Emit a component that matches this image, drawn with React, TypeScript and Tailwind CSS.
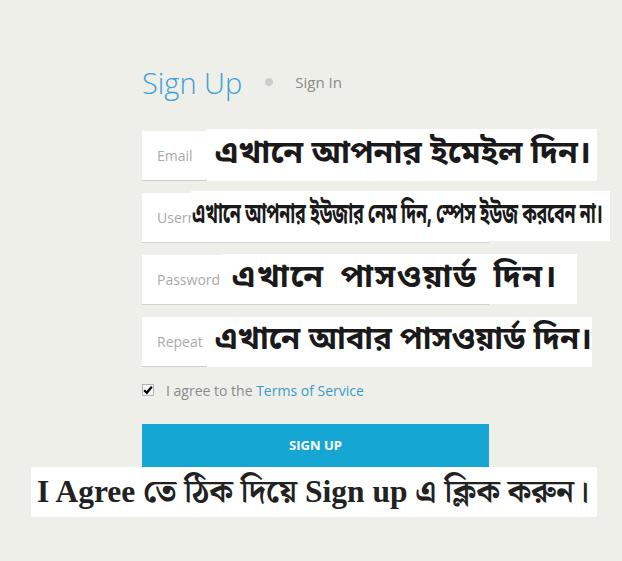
import React from "react";

const bn = { fontFamily: '"Noto Sans Bengali","Noto Serif Bengali","Lohit Bengali","FreeSans",sans-serif' };

function Field({ placeholder, overlay, ox, ow, oy, oh, textCls }: { placeholder: string; overlay: string; ox: number; ow: number; oy: number; oh: number; textCls: string }) {
  return (
    <div className="relative h-[50px] w-[347px] mb-[12px]">
      <div className="h-full w-full bg-white border-b border-[#d0cfca] flex items-center pl-[15px] text-[14px] text-[#aaaaaa]">
        {placeholder}
      </div>
      <div
        className="absolute bg-white flex items-center whitespace-nowrap overflow-hidden"
        style={{ left: ox, width: ow, top: oy, height: oh }}
      >
        <span className={textCls} style={bn}>{overlay}</span>
      </div>
    </div>
  );
}

export default function App() {
  return (
    <div className="min-h-[561px] w-full bg-[#efefea] relative" style={{ fontFamily: '"Open Sans", sans-serif' }}>
      <div className="pl-[142px] pt-[58px]">
        <div className="flex items-center h-[48px]">
          <span className="text-[29px] font-light text-[#3d9fd6] leading-none">Sign Up</span>
          <span className="ml-[23px] w-[8px] h-[8px] rounded-full bg-[#cccccc]" />
          <span className="ml-[22px] text-[15px] text-[#8b8b8b] leading-none">Sign In</span>
        </div>
        <div className="mt-[25px]">
          <Field placeholder="Email" overlay="এখানে আপনার ইমেইল দিন।" ox={65} ow={390} oy={-2} oh={52} textCls="text-[32px] font-bold text-[#1a1a1a] pl-[8px]" />
          <Field placeholder="Username" overlay="এখানে আপনার ইউজার নেম দিন, স্পেস ইউজ করবেন না।" ox={49} ow={419} oy={-2} oh={50} textCls="inline-block text-[28px] font-bold text-[#1a1a1a] pl-[2px] origin-left scale-x-[0.64] tracking-[-0.5px]" />
          <Field placeholder="Password" overlay="এখানে পাসওয়ার্ড দিন।" ox={80} ow={355} oy={-1} oh={50} textCls="text-[32px] font-bold text-[#1a1a1a] pl-[10px] tracking-[1.5px] [word-spacing:6px]" />
          <Field placeholder="Repeat Password" overlay="এখানে আবার পাসওয়ার্ড দিন।" ox={65} ow={385} oy={0} oh={50} textCls="text-[31px] font-bold text-[#1a1a1a] pl-[8px]" />
        </div>
        <div className="flex items-center mt-[10px] h-[22px] text-[14px] text-[#8a8a8a]">
          <span className="w-[12px] h-[12px] border border-[#b5b5b5] bg-[#f4f4f4] flex items-center justify-center">
            <svg width="10" height="10" viewBox="0 0 10 10">
              <path d="M1.2 5.2 L3.8 7.8 L8.8 1.8" stroke="#000" strokeWidth="2.2" fill="none" />
            </svg>
          </span>
          <span className="ml-[12px]">I agree to the <span className="text-[#3a9cc7]">Terms of Service</span></span>
        </div>
        <div className="relative mt-[23px] w-[347px]">
          <div className="h-[44px] bg-[#16a6d3] flex items-center justify-center text-white text-[13px] font-bold">SIGN UP</div>
        </div>
      </div>
      <div className="absolute left-[31px] top-[467px] w-[566px] h-[50px] bg-white flex items-center pl-[6px] whitespace-nowrap overflow-hidden">
        <span className="text-[31.5px] font-bold text-[#222]" style={{ fontFamily: '"Liberation Serif","Noto Serif Bengali","Noto Sans Bengali",serif' }}>
          I Agree তে ঠিক দিয়ে Sign up এ ক্লিক করুন।
        </span>
      </div>
    </div>
  );
}
